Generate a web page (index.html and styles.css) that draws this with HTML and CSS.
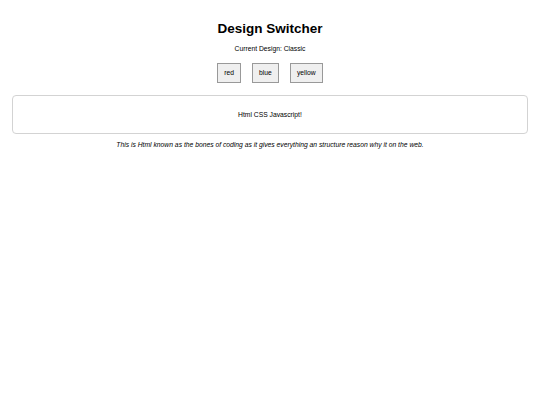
FILE: index.html
```html
<!DOCTYPE html>
<html lang="en">
<head>
<meta charset="utf-8">
<title>Design Switcher</title>
<link rel="stylesheet" href="styles.css">
</head>
<body class="classic">
  <h1 class="title">Design Switcher</h1>
  <p class="current">Current Design: Classic</p>
  <div class="switcher">
    <button class="switch-btn">red</button>
    <button class="switch-btn">blue</button>
    <button class="switch-btn">yellow</button>
  </div>
  <div class="card">
    <p class="card-text">Html CSS Javascript!</p>
  </div>
  <p class="note">This is Html known as the bones of coding as it gives everything an structure reason why it on the web.</p>
</body>
</html>
```

FILE: styles.css
```css
html {
  background: #ffffff;
}

body {
  margin: 3.4px;
  padding: 8.4px;
  font-family: "Liberation Sans", Arial, sans-serif;
  font-size: 6.75px;
  color: #000;
  text-align: center;
}

.title {
  font-size: 13.5px;
  font-weight: bold;
  margin: 9.4px 0 8.6px;
}

.current {
  margin: 6.75px 0;
}

.switcher {
  display: flex;
  justify-content: center;
  gap: 10.5px;
  margin: 11px 0 12.5px;
}

.switch-btn {
  font-family: "Liberation Sans", Arial, sans-serif;
  font-size: 6.75px;
  line-height: 1.15;
  padding: 5px 6.3px;
  background: #efefef;
  border: 1px solid #999999;
  border-radius: 0;
  color: #000;
}

.card {
  border: 1px solid #d3d3d3;
  border-radius: 4px;
  padding: 8.4px;
}

.card-text {
  margin: 6.75px 0;
}

.note {
  font-style: italic;
  margin: 6.75px 0;
}
```
